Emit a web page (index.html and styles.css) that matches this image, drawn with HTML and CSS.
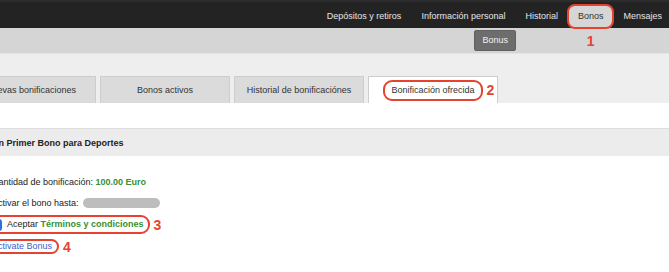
FILE: index.html
```html
<!DOCTYPE html>
<html lang="es">
<head>
  <meta charset="UTF-8">
  <meta name="viewport" content="width=device-width, initial-scale=1.0">
  <title>Bonos</title>
  <link rel="stylesheet" href="styles.css">
</head>
<body>

  <header class="topbar">
    <nav class="menu">
      <a class="menu-item">Depósitos y retiros</a>
      <a class="menu-item">Información personal</a>
      <a class="menu-item">Historial</a>
      <a class="menu-item active">Bonos<span class="num num-below">1</span></a>
      <a class="menu-item">Mensajes</a>
    </nav>
  </header>

  <div class="subbar">
    <span class="subbtn">Bonus</span>
  </div>

  <div class="tabstrip">
    <div class="tabs">
      <div class="tab">Nuevas bonificaciones</div>
      <div class="tab">Bonos activos</div>
      <div class="tab">Historial de bonificaciónes</div>
      <div class="tab active"><span class="mark mark-tab">Bonificación ofrecida<span class="num num-right">2</span></span></div>
    </div>
  </div>

  <div class="panel-top"></div>

  <section class="offer">
    <div class="offer-title"><span>Bonificación Primer Bono para Deportes</span></div>
    <div class="offer-body">
      <div class="row">Cantidad de bonificación:&nbsp;<b class="green">100.00 Euro</b></div>
      <div class="row">Activar el bono hasta:<span class="pill"></span></div>
      <div class="row row-check">
        <label class="mark mark-check"><span class="check"></span>Aceptar&nbsp;<b class="green">Términos y condiciones</b><span class="num num-right">3</span></label>
      </div>
      <div class="row">
        <a class="mark mark-link">Activate Bonus<span class="num num-right">4</span></a>
      </div>
    </div>
  </section>

</body>
</html>
```

FILE: styles.css
```css
body {
  margin: 0;
  overflow: hidden;
  font-family: "Liberation Sans", Arial, sans-serif;
  font-size: 9px;
  color: #222;
  background-color: #fff;
}
.topbar {
  background-color: #232323;
  height: 28px;
  border-top: 2px solid #2c2c2c;
  box-sizing: border-box;
}
.menu {
  display: flex;
  justify-content: flex-end;
  padding-top: 3px;
  margin-right: -3px;
}
.menu-item {
  position: relative;
  padding: 0 10px;
  line-height: 23px;
  color: #e6e6e6;
}
.menu-item.active {
  background-color: #d6d6d6;
  color: #333;
  border-radius: 7px;
  outline: 2px solid #e5432f;
  outline-offset: -1px;
}
.subbar {
  background-color: #d5d5d5;
  height: 25px;
  border-bottom: 1px solid #e4e4e4;
  display: flex;
  justify-content: flex-end;
  align-items: flex-start;
  padding-right: 153px;
}
.subbtn {
  margin-top: 2px;
  padding: 0 7px;
  line-height: 19px;
  background-color: #6d6d6d;
  border: 1px solid #616161;
  border-radius: 2px;
  color: #f2f2f2;
}
.tabstrip {
  background-color: #eeeeee;
  padding-top: 22px;
}
.tabs {
  display: flex;
  gap: 4px;
  margin-left: -34px;
}
.tab {
  width: 130px;
  height: 27px;
  box-sizing: border-box;
  border: 1px solid #cdcdcd;
  border-bottom: none;
  background-color: #dbdbdb;
  color: #333;
  display: flex;
  align-items: center;
  justify-content: center;
}
.tab.active {
  background-color: #fff;
}
.panel-top {
  height: 25px;
  border-bottom: 1px solid #dcdcdc;
}
.offer-title {
  background-color: #ececec;
  height: 27px;
  line-height: 28px;
  font-weight: bold;
  white-space: nowrap;
  overflow: hidden;
}
.offer-title span {
  margin-left: -50px;
}
.offer-body {
  padding-top: 15px;
  margin-left: -8px;
}
.row {
  height: 21px;
  display: flex;
  align-items: center;
  white-space: nowrap;
}
.row-check {
  height: 23px;
}
.green {
  color: #3a8f2f;
}
.pill {
  display: inline-block;
  width: 77px;
  height: 10px;
  margin-left: 4px;
  border-radius: 5px;
  background-color: #bdbdbd;
}
.mark {
  position: relative;
  border: 2px solid #e5432f;
  border-radius: 9px;
}
.mark-tab {
  padding: 0 6px;
  line-height: 17px;
}
.mark-check {
  display: flex;
  align-items: center;
  margin-left: -4px;
  padding: 1px 4px 1px 0;
  line-height: 13px;
}
.check {
  width: 12px;
  height: 12px;
  margin-right: 5px;
  border-radius: 3px;
  background-color: #2f6fdb;
}
.mark-link {
  margin-left: -7px;
  padding: 0 5px;
  line-height: 11px;
  color: #3d5fd0;
}
.num {
  position: absolute;
  color: #e5432f;
  font-weight: bold;
  font-size: 14px;
  line-height: 14px;
}
.num-below {
  left: 50%;
  top: 100%;
  margin-top: 6px;
  transform: translateX(-50%);
}
.num-right {
  left: 100%;
  top: 50%;
  margin-left: 6px;
  transform: translateY(-50%);
}
```
